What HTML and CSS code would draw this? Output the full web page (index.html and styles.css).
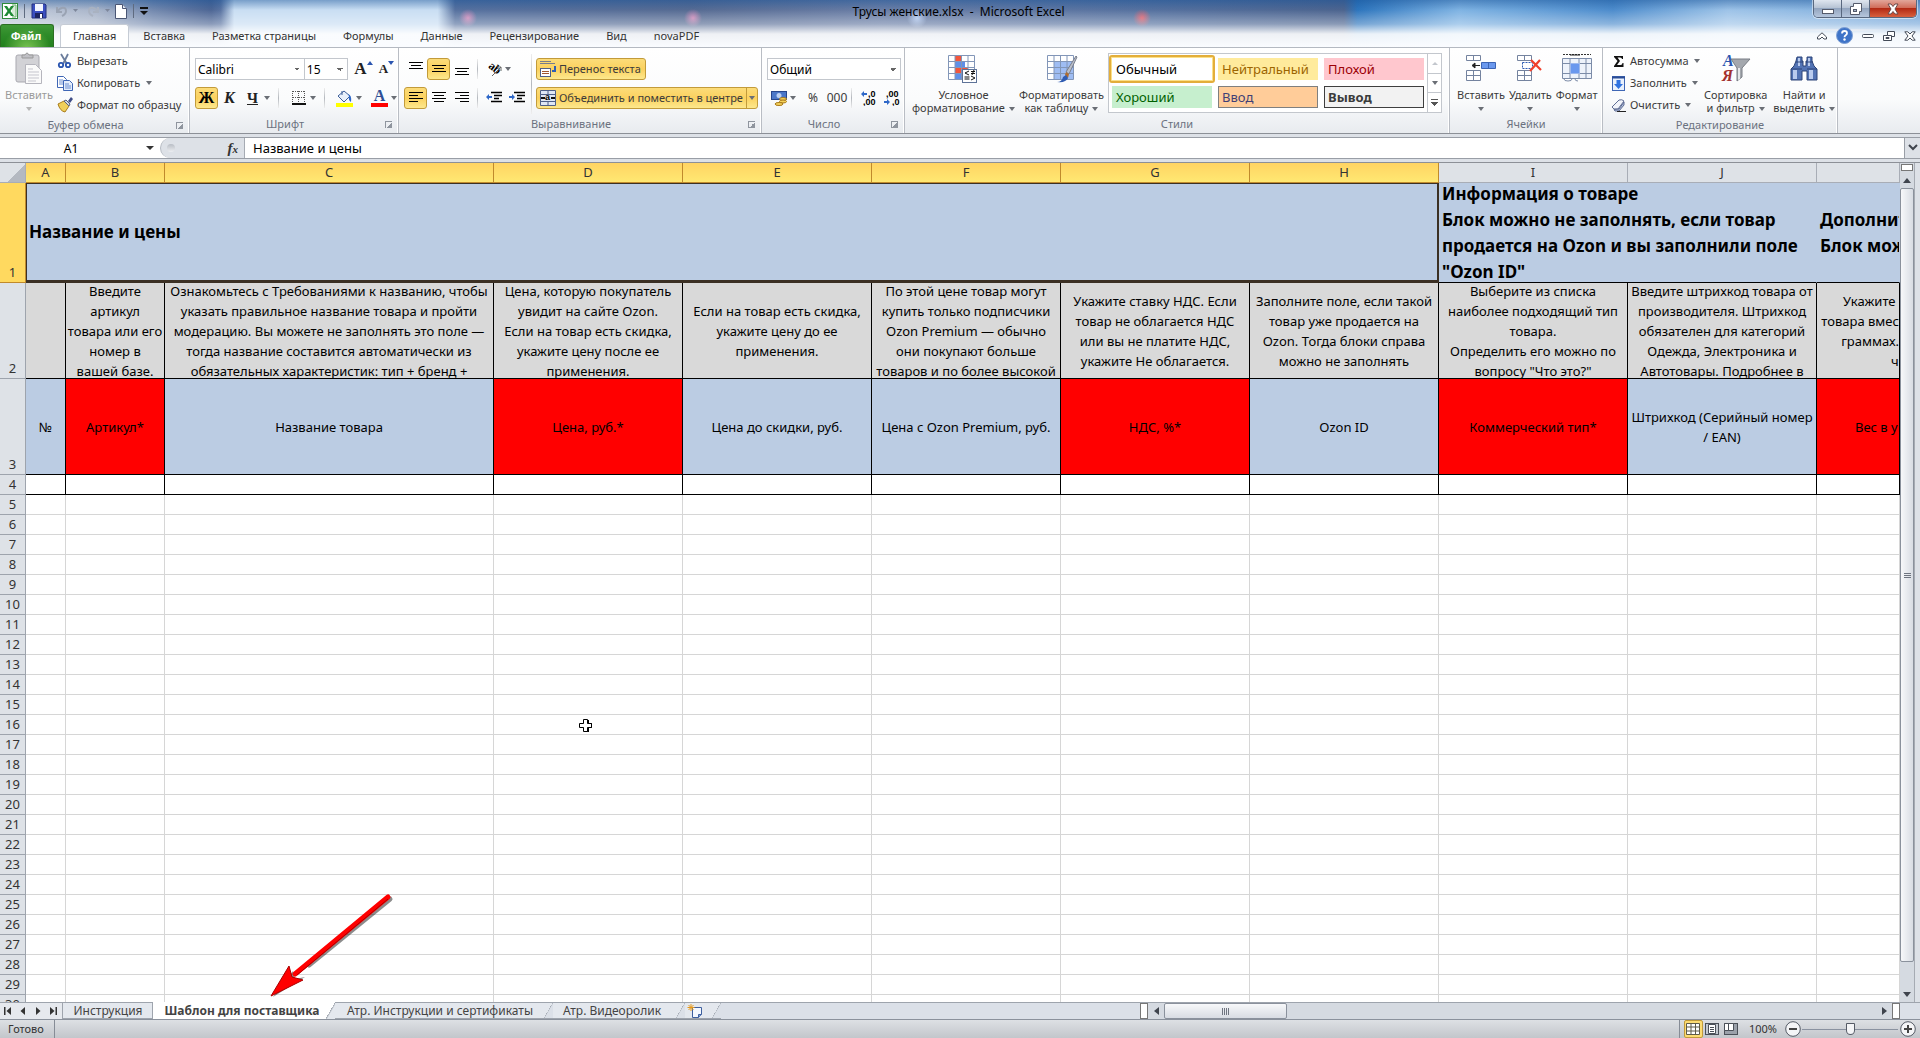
FILE: index.html
```html
<!DOCTYPE html>
<html lang="ru">
<head>
<meta charset="utf-8">
<title>Трусы женские.xlsx - Microsoft Excel</title>
<link rel="stylesheet" href="styles.css">
</head>
<body>
<header class="top">
  <div class="titlebar">
    <div class="quick">
      <svg width="16" height="16" viewBox="0 0 16 16"><rect x=".5" y=".5" width="15" height="15" fill="#fff" stroke="#2f8a3c"/><path d="M10 2h4v12h-4" fill="#d9ecd9" stroke="#6bb06f"/><path d="M2 3h3l2 3 2-3h3L8.500 8l3.500 5H9L7 10l-2 3H2l3.500-5z" fill="#1f8a35"/></svg>
      <i class="tick"></i>
      <button aria-label="Сохранить"><svg width="16" height="16" viewBox="0 0 16 16"><path d="M1 1h13l1 1v13H1z" fill="#3b4fc0" stroke="#24307e"/><rect x="4" y="1" width="8" height="7" fill="#f2f5ff"/><rect x="4" y="10" width="8" height="5" fill="#1d2560"/><rect x="9" y="11" width="2" height="4" fill="#fff"/></svg></button>
      <button class="gap" aria-label="Отменить"><svg width="24" height="14" viewBox="0 0 24 14"><path d="M2 3v5h5M2.500 7.500C5 3 11 2 11 7q0 3-4 5" fill="none" stroke="#9aa3b3" stroke-width="2"/><path d="M18 5h5l-2.500 3z" fill="#7d879b"/></svg></button>
      <button class="gap" aria-label="Вернуть"><svg width="24" height="14" viewBox="0 0 24 14"><path d="M11 3v5H6M10.500 7.500C8 3 2 2 2 7q0 3 4 5" fill="none" stroke="#a9b2c1" stroke-width="2"/><path d="M18 5h5l-2.500 3z" fill="#7d879b"/></svg></button>
      <button aria-label="Создать"><svg width="12" height="15" viewBox="0 0 12 15"><path d="M.5.5h7l4 4v10H.5z" fill="#fff" stroke="#4a5674"/><path d="M7.500.5v4h4" fill="#dfe6f2" stroke="#4a5674"/></svg></button>
      <i class="tick"></i>
      <button aria-label="Настройка панели"><svg width="8" height="10" viewBox="0 0 8 10"><path d="M0 1h8v2H0zM0 5h8L4 9z" fill="#111"/></svg></button>
    </div>
    <h1>Трусы женские.xlsx&nbsp; -&nbsp; Microsoft Excel</h1>
    <div class="winbtns">
      <button class="wb" aria-label="Свернуть"><svg width="14" height="14" viewBox="0 0 14 14"><rect x="1.500" y="7.500" width="11" height="4" fill="#fff" stroke="#555b6b"/></svg></button>
      <button class="wb" aria-label="Развернуть"><svg width="14" height="14" viewBox="0 0 14 14"><path d="M4.500 1.500h8v8h-2v3h-9v-8h3z" fill="#fff" stroke="#555b6b"/><rect x="4.500" y="7.500" width="3" height="2" fill="#aab6ca" stroke="#555b6b"/></svg></button>
      <button class="wb close" aria-label="Закрыть"><svg width="14" height="14" viewBox="0 0 14 14"><path d="M2 2h3l2 2.500L9 2h3L9 7l3 5H9L7 9.500 5 12H2l3-5z" fill="#fff" stroke="#6b4a4a"/></svg></button>
    </div>
  </div>
  <nav class="tabs">
    <button class="file">Файл</button>
    <button class="tab on">Главная</button>
    <button class="tab">Вставка</button>
    <button class="tab">Разметка страницы</button>
    <button class="tab">Формулы</button>
    <button class="tab">Данные</button>
    <button class="tab">Рецензирование</button>
    <button class="tab">Вид</button>
    <button class="tab">novaPDF</button>
    <div class="docbtns">
      <button aria-label="Свернуть ленту"><svg width="10" height="8" viewBox="0 0 10 8"><path d="M.5 5L5 .8 9.500 5v2H7L5 5 3 7H.5z" fill="#fff" stroke="#444b58"/></svg></button>
      <button aria-label="Справка"><svg width="17" height="17" viewBox="0 0 17 17"><circle cx="8.500" cy="8.500" r="8" fill="#3f74c8" stroke="#7d9fd4"/><path d="M6 6.500q0-2.500 2.500-2.500T11 6.300q0 1.200-1.300 1.900-1.200.7-1.200 2" fill="none" stroke="#fff" stroke-width="1.800"/><circle cx="8.500" cy="12.500" r="1.200" fill="#fff"/></svg></button>
      <button aria-label="Свернуть окно"><svg width="12" height="6" viewBox="0 0 12 6"><rect x=".5" y="1.500" width="11" height="3" rx="1" fill="#fff" stroke="#444b58"/></svg></button>
      <button aria-label="Восстановить окно"><svg width="12" height="12" viewBox="0 0 12 12"><path d="M4.500 1.500h7v5h-3v4h-8v-5h4z" fill="#fff" stroke="#444b58"/><path d="M4.500 5.500h4v2M3 7.500h3v1H3z" fill="none" stroke="#444b58"/></svg></button>
      <button aria-label="Закрыть окно"><svg width="12" height="10" viewBox="0 0 12 10"><path d="M.8.8h3L6 3 8.200.8h3L8 5l3.200 4.200h-3L6 7 3.800 9.200h-3L4 5z" fill="#fff" stroke="#444b58"/></svg></button>
    </div>
  </nav>
</header>

<div class="ribbon">
  <section class="grp clip">
    <div class="body">
      <button class="big dim"><svg width="28" height="32" viewBox="0 0 28 32"><rect x="1" y="3" width="23" height="27" rx="2" fill="#d2d2d6" stroke="#a9a9b0"/><path d="M7 6V3h3q2-4 4 0h4v3z" fill="#c0c0c5" stroke="#999"/><path d="M10.500 12.500h10l6 6v13h-16z" fill="#fafafa" stroke="#b5b5bd"/><path d="M13 17h5M13 20h11M13 23h11M13 26h11M13 29h8" stroke="#c5c5cd"/></svg><span>Вставить</span><i class="dd"></i></button>
      <div class="stack">
        <button class="row"><svg width="16" height="16" viewBox="0 0 16 16"><path d="M4 1l6 10M11 1L6 11" stroke="#6b7d9c" stroke-width="1.800"/><circle cx="4" cy="12" r="2.200" fill="none" stroke="#2a55b0" stroke-width="1.800"/><circle cx="11" cy="12" r="2.200" fill="none" stroke="#2a55b0" stroke-width="1.800"/></svg>Вырезать</button>
        <button class="row"><svg width="16" height="16" viewBox="0 0 16 16"><path d="M.5 1.500h6l3 3v8h-9z" fill="#fff" stroke="#3e66b5"/><path d="M6.500 5.500h6l3 3v7h-9z" fill="#e4edfb" stroke="#3e66b5"/><path d="M8 9h4M8 11h6M8 13h6M2 5h4M2 7h4M2 9h4" stroke="#6a8ed0"/></svg>Копировать<i class="dd"></i></button>
        <button class="row"><svg width="16" height="16" viewBox="0 0 16 16"><path d="M1 7l6-3 5 5-4 6q-5-1-7-8z" fill="#efcf5a" stroke="#a97c1b"/><path d="M7 4l2-1 4 4-1 2z" fill="#d5d8e0" stroke="#55607a"/><path d="M11 4l3-4 2 2-3 4z" fill="#3f4d86"/></svg>Формат по образцу</button>
      </div>
    </div>
    <footer>Буфер обмена<i class="launch"></i></footer>
  </section>

  <section class="grp font">
    <div class="body cols">
      <div class="line">
        <select class="combo w-font" aria-label="Шрифт"><option>Calibri</option></select><select class="combo w-size" aria-label="Размер"><option>15</option></select>
        <button class="ic ser big-a">A<svg width="6" height="4" viewBox="0 0 6 4"><path d="M0 4l3-4 3 4z" fill="#2a55b0"/></svg></button>
        <button class="ic ser small-a">A<svg width="6" height="4" viewBox="0 0 6 4"><path d="M0 0h6L3 4z" fill="#2a55b0"/></svg></button>
      </div>
      <div class="line">
        <button class="ic ser hot b">Ж</button>
        <button class="ic ser i">К</button>
        <button class="ic ser u">Ч</button><i class="dd"></i>
        <i class="sep"></i>
        <button class="ic"><svg width="14" height="14" viewBox="0 0 14 14"><path d="M1 .5h12M1 6.500h12M.5 0v13M6.500 0v13M12.500 0v13" stroke="#555" stroke-dasharray="1 1" fill="none"/><path d="M0 13h14" stroke="#111" stroke-width="2"/></svg></button><i class="dd"></i>
        <i class="sep"></i>
        <button class="ic"><svg width="17" height="17" viewBox="0 0 17 17"><path d="M2 6l6-5 6 5-6 6z" fill="#e8f0fb" stroke="#3c5e99"/><path d="M6 5V1" stroke="#3c5e99"/><path d="M12 4q4 1 3 8-3-2-2-6z" fill="#2f68c8"/><rect y="13" width="17" height="4" fill="#ff0"/></svg></button><i class="dd"></i>
        <button class="ic ser a-color">A<i></i></button><i class="dd"></i>
      </div>
    </div>
    <footer>Шрифт<i class="launch"></i></footer>
  </section>

  <section class="grp align">
    <div class="body">
      <div class="cols">
        <div class="line">
          <button class="ic"><svg width="14" height="14" viewBox="0 0 14 14"><path d="M0 .5h14M2 3.500h10M0 6.500h14" stroke="#000"/></svg></button>
          <button class="ic hot"><svg width="14" height="14" viewBox="0 0 14 14"><path d="M0 3.500h14M2 6.500h10M0 9.500h14" stroke="#000"/></svg></button>
          <button class="ic"><svg width="14" height="14" viewBox="0 0 14 14"><path d="M0 6.500h14M2 9.500h10M0 12.500h14" stroke="#000"/></svg></button>
          <i class="sep"></i>
          <button class="ic"><svg width="16" height="16" viewBox="0 0 16 16"><text x="1" y="8" font-family="Liberation Serif" font-weight="bold" font-size="12" transform="rotate(38 4 8)">ab</text><path d="M6 15l9-9M11 6h4v4" fill="none" stroke="#666"/></svg></button><i class="dd"></i>
        </div>
        <div class="line">
          <button class="ic hot"><svg width="14" height="14" viewBox="0 0 14 14"><path d="M0 1.500h14M0 4.500h9M0 7.500h14M0 10.500h9" stroke="#000"/></svg></button>
          <button class="ic"><svg width="14" height="14" viewBox="0 0 14 14"><path d="M0 1.500h14M2 4.500h10M0 7.500h14M2 10.500h10" stroke="#000"/></svg></button>
          <button class="ic"><svg width="14" height="14" viewBox="0 0 14 14"><path d="M0 1.500h14M5 4.500h9M0 7.500h14M5 10.500h9" stroke="#000"/></svg></button>
          <i class="sep"></i>
          <button class="ic"><svg width="16" height="14" viewBox="0 0 16 14"><path d="M5 1.500h11M8 4.500h8M8 7.500h5M5 10.500h11" stroke="#000" stroke-width="1.500"/><path d="M0 6l3-3v2h3v2H3v2z" fill="#2f68c8"/></svg></button>
          <button class="ic"><svg width="16" height="14" viewBox="0 0 16 14"><path d="M5 1.500h11M8 4.500h8M8 7.500h5M5 10.500h11" stroke="#000" stroke-width="1.500"/><path d="M6 6L3 3v2H0v2h3v2z" fill="#2f68c8"/></svg></button>
        </div>
      </div>
      <i class="sep tall"></i>
      <div class="cols">
        <div class="line"><button class="wide"><svg width="16" height="16" viewBox="0 0 16 16"><path d="M0 2.500h15M0 .5h11" stroke="#777d8c"/><rect x=".5" y="7.500" width="10" height="8" fill="#fff" stroke="#4e5f88"/><path d="M2 10.500h7M2 12.500h7" stroke="#a2562e"/><path d="M15 5v5h-3" fill="none" stroke="#2f5fb4" stroke-width="2"/></svg>Перенос текста</button></div>
        <div class="line"><button class="wide merge"><svg width="16" height="16" viewBox="0 0 16 16"><path d="M.5.500h15v15H.5zM8 0v4M8 12v4M0 4.500h16M0 11.500h16" fill="#dfe7f5" stroke="#4e5f88"/><path d="M1 8h4M11 8h4" stroke="#111" stroke-width="2"/><text x="5" y="10" font-family="Liberation Sans" font-weight="bold" font-size="9">a</text></svg>Объединить и поместить в центре<i class="split"><i class="dd"></i></i></button></div>
      </div>
    </div>
    <footer>Выравнивание<i class="launch"></i></footer>
  </section>

  <section class="grp number">
    <div class="body cols">
      <div class="line"><select class="combo w-num" aria-label="Числовой формат"><option>Общий</option></select></div>
      <div class="line">
        <button class="ic"><svg width="16" height="16" viewBox="0 0 16 16"><rect x=".5" y="1.500" width="15" height="8" fill="#4b77c8" stroke="#27468c"/><circle cx="8" cy="5.500" r="2.500" fill="#bcd0f2"/><ellipse cx="12" cy="9" rx="3.500" ry="1.500" fill="#f5d25b" stroke="#a8791a"/><ellipse cx="12" cy="11.500" rx="3.500" ry="1.500" fill="#f5d25b" stroke="#a8791a"/><ellipse cx="8" cy="14" rx="4" ry="1.500" fill="#f5d25b" stroke="#a8791a"/></svg></button><i class="dd"></i>
        <button class="ic digits">%</button>
        <button class="ic digits">000</button>
        <i class="sep"></i>
        <button class="ic"><svg width="16" height="16" viewBox="0 0 16 16"><path d="M0 4l3-3v2h3v2H3v2z" fill="#2f68c8"/><text x="7" y="7" font-family="Liberation Sans" font-weight="bold" font-size="9">,0</text><text x="2" y="15" font-family="Liberation Sans" font-weight="bold" font-size="9">,00</text></svg></button>
        <button class="ic"><svg width="16" height="16" viewBox="0 0 16 16"><text x="2" y="7" font-family="Liberation Sans" font-weight="bold" font-size="9">,00</text><path d="M6 12L3 9v2H0v2h3v2z" fill="#2f68c8"/><text x="8" y="15" font-family="Liberation Sans" font-weight="bold" font-size="9">,0</text></svg></button>
      </div>
    </div>
    <footer>Число<i class="launch"></i></footer>
  </section>

  <section class="grp styles">
    <div class="body">
      <button class="big"><svg width="32" height="32" viewBox="0 0 32 32"><path d="M1.500 3.500h26v24h-26z" fill="#fff"/><path d="M8 3h6v6H8zM8 15h13v6H8z" fill="#f2553c"/><path d="M8 9h10v6H8zM8 21h6v6H8z" fill="#5f8fe8"/><path d="M1.500 3.500h26v24h-26zM1.500 9.500h26M1.500 15.500h26M1.500 21.500h26M8 3v24M14.500 3v24M21 3v24" fill="none" stroke="#8296b8"/><rect x="15.500" y="17.500" width="14" height="13" fill="#fff" stroke="#5e7398"/><path d="M22 19l-4 2 4 2M17.500 25h5M17.500 27h5M24 19.500h4M24 21.500h4M27 18l-2 5M24 24l4 2-4 2" fill="none" stroke="#111"/></svg><span>Условное<br>форматирование<i class="dd"></i></span></button>
      <button class="big"><svg width="32" height="32" viewBox="0 0 32 32"><path d="M1.500 3.500h26v24h-26z" fill="#fff"/><path d="M8 9h20v18H8z" fill="#9fbdf3"/><path d="M1.500 3.500h26v24h-26zM1.500 9.500h26M1.500 15.500h26M1.500 21.500h26M8 3v24M14.500 3v24M21 3v24" fill="none" stroke="#8296b8"/><path d="M30 4L20 20l3 2 8-17z" fill="#b9bec9" stroke="#7a7f8c"/><path d="M20 20l3 2-1 4-3-3z" fill="#b26d2c"/><path d="M11 30q5 0 6-5l3-2 2 3q-2 5-11 4z" fill="#2f5cb2"/></svg><span>Форматировать<br>как таблицу<i class="dd"></i></span></button>
      <div class="gallery">
        <div class="cells">
          <button class="st normal">Обычный</button><button class="st neutral">Нейтральный</button><button class="st bad">Плохой</button>
          <button class="st good">Хороший</button><button class="st input">Ввод</button><button class="st output">Вывод</button>
        </div>
        <div class="gscroll">
          <button aria-label="Вверх"><i class="up"></i></button><button aria-label="Вниз"><i class="dd"></i></button><button aria-label="Ещё"><i class="more"></i></button>
        </div>
      </div>
    </div>
    <footer>Стили</footer>
  </section>

  <section class="grp cellsg">
    <div class="body">
      <button class="big"><svg width="32" height="32" viewBox="0 0 32 32"><path d="M1.500 3.500h14v5h-14zM8.500 3v5M1.500 18.500h14v10h-14zM8.500 18v10M1.500 23.500h14" fill="#fff" stroke="#74839f"/><path d="M16.500 10.500h14v6h-14zM23.500 10v6" fill="#6a98ee" stroke="#3c64b4"/><path d="M15 13.500H9M10 11l-3 2.500L10 16z" fill="#222" stroke="#222"/></svg><span>Вставить</span><i class="dd"></i></button>
      <button class="big"><svg width="32" height="32" viewBox="0 0 32 32"><path d="M3.500 3.500h14v5h-14zM10.500 3v5M3.500 18.500h14v10h-14zM10.500 18v10M3.500 23.500h14" fill="#fff" stroke="#74839f"/><path d="M8.500 10.500h10v6h-10z" fill="none" stroke="#2f5cb2" stroke-dasharray="2 1"/><path d="M17 8l10 10M26 8L16 19" stroke="#f0402c" stroke-width="2.200"/></svg><span>Удалить</span><i class="dd"></i></button>
      <button class="big"><svg width="32" height="32" viewBox="0 0 32 32"><path d="M1.500 6.500h29v20h-29zM1.500 11.500h29M1.500 21.500h29M9 6v20M18 6v20M25 6v20" fill="#eef3fb" stroke="#7c8ca8"/><rect x="9.500" y="11.500" width="9" height="10" fill="#6a98ee" stroke="#9db8ec"/><path d="M3 27q0 2 4 2t4-2M14 27q0 2 3 2" fill="#fff" stroke="#7c8ca8"/><path d="M2 2.500h28" stroke="#333" stroke-dasharray="2 1"/><path d="M9 3h10" stroke="#222"/></svg><span>Формат</span><i class="dd"></i></button>
    </div>
    <footer>Ячейки</footer>
  </section>

  <section class="grp edit">
    <div class="body">
      <div class="stack">
        <button class="row"><svg width="16" height="16" viewBox="0 0 16 16"><path d="M3 3h9v3h-1q0-1.500-2-1.500H6.500L9 8l-3 4h3.500q2 0 2-2h1v4H3v-1l3.500-5L3 4z" fill="#111"/></svg>Автосумма<i class="dd"></i></button>
        <button class="row"><svg width="16" height="16" viewBox="0 0 16 16"><rect x="1.500" y="1.500" width="12" height="14" fill="#e9f1fd" stroke="#3e66b5"/><path d="M1 2.500h13" stroke="#2b4c94" stroke-width="2"/><path d="M5.500 5h4v4h2.500L7.500 14 3 9h2.500z" fill="#2f72e0"/></svg>Заполнить<i class="dd"></i></button>
        <button class="row"><svg width="16" height="16" viewBox="0 0 16 16"><path d="M1 10l7-7q3-1 5 1l-6 8H3z" fill="#f2f4fa" stroke="#5f6d94"/><path d="M3 12.500l5-.5 5-7v3l-5 6H4z" fill="#b5c1de" stroke="#5f6d94"/><path d="M6 14.500h9" stroke="#222"/></svg>Очистить<i class="dd"></i></button>
      </div>
      <button class="big"><svg width="32" height="32" viewBox="0 0 32 32"><text x="3" y="14" font-family="Liberation Serif" font-weight="bold" font-style="italic" font-size="16" fill="#2a55b0">A</text><text x="2" y="29" font-family="Liberation Serif" font-weight="bold" font-style="italic" font-size="16" fill="#a3302e">Я</text><path d="M11 7h19l-8 9v9l-5 4V16z" fill="#a4a8ae" stroke="#787c84"/><path d="M18 16h2v11l-2 1z" fill="#e5e7ea"/></svg><span>Сортировка<br>и фильтр<i class="dd"></i></span></button>
      <button class="big"><svg width="32" height="32" viewBox="0 0 32 32"><path d="M9 5h5v4h1v5h3V9h1V5h5v4l2 5 3 3v11H19v-9h-5v9H3V17l3-3 2-5z" fill="#5273b4" stroke="#2c4478"/><path d="M5 18h4v9H5zM21 18h4v9h-4zM10 6h2v8h-2zM20 6h2v8h-2z" fill="#b9cbee"/><path d="M3 17h11M19 17h10M8 10h7M18 10h7" stroke="#2c4478"/></svg><span>Найти и<br>выделить<i class="dd"></i></span></button>
    </div>
    <footer>Редактирование</footer>
  </section>
</div>

<div class="formula">
  <input class="name" aria-label="Поле имени" value="A1">
  <i class="dd dark"></i>
  <div class="fx"><i class="knob"></i><span><em>f</em>x</span></div>
  <input class="expr" aria-label="Строка формул" value="Название и цены">
  <button class="expand" aria-label="Развернуть строку формул"><svg width="10" height="8" viewBox="0 0 10 8"><path d="M1 1l4 4 4-4" fill="none" stroke="#3f444d" stroke-width="2"/></svg></button>
</div>

<main class="work">
  <div class="sheet">
    <table>
      <colgroup><col class="c-h"><col class="c-a"><col class="c-b"><col class="c-c"><col class="c-d"><col class="c-d"><col class="c-d"><col class="c-d"><col class="c-d"><col class="c-d"><col class="c-d"><col></colgroup>
      <thead><tr><th class="corner"></th><th class="sel">A</th><th class="sel">B</th><th class="sel">C</th><th class="sel">D</th><th class="sel">E</th><th class="sel">F</th><th class="sel">G</th><th class="sel">H</th><th>I</th><th>J</th><th></th></tr></thead>
      <tbody id="rows">
        <tr class="r1"><th class="sel">1</th><td colspan="8" class="picked">Название и цены</td><td colspan="2"><div class="clip-text">Информация о товаре<br>Блок можно не заполнять, если товар<br>продается на Ozon и вы заполнили поле<br>"Ozon ID"</div></td><td>Дополнительно<br>Блок можно не заполнять</td></tr>
        <tr class="r2"><th>2</th><td></td>
          <td><div class="clip-text">Введите<br>артикул<br>товара или его<br>номер в<br>вашей базе.</div></td>
          <td><div class="clip-text">Ознакомьтесь с Требованиями к названию, чтобы<br>указать правильное название товара и пройти<br>модерацию. Вы можете не заполнять это поле —<br>тогда название составится автоматически из<br>обязательных характеристик: тип + бренд +</div></td>
          <td><div class="clip-text">Цена, которую покупатель<br>увидит на сайте Ozon.<br>Если на товар есть скидка,<br>укажите цену после ее<br>применения.</div></td>
          <td><div class="clip-text">Если на товар есть скидка,<br>укажите цену до ее<br>применения.</div></td>
          <td><div class="clip-text">По этой цене товар могут<br>купить только подписчики<br>Ozon Premium — обычно<br>они покупают больше<br>товаров и по более высокой</div></td>
          <td><div class="clip-text">Укажите ставку НДС. Если<br>товар не облагается НДС<br>или вы не платите НДС,<br>укажите Не облагается.</div></td>
          <td><div class="clip-text">Заполните поле, если такой<br>товар уже продается на<br>Ozon. Тогда блоки справа<br>можно не заполнять</div></td>
          <td><div class="clip-text">Выберите из списка<br>наиболее подходящий тип<br>товара.<br>Определить его можно по<br>вопросу "Что это?"</div></td>
          <td><div class="clip-text">Введите штрихкод товара от<br>производителя. Штрихкод<br>обязателен для категорий<br>Одежда, Электроника и<br>Автотовары. Подробнее в</div></td>
          <td><div class="clip-text cut">Укажите вес единицы<br>товара вместе с упаковкой в<br>граммах. Вес — целое<br>число.</div></td></tr>
        <tr class="r3"><th>3</th><td>№</td><td class="req">Артикул*</td><td>Название товара</td><td class="req">Цена, руб.*</td><td>Цена до скидки, руб.</td><td>Цена с Ozon Premium, руб.</td><td class="req">НДС, %*</td><td>Ozon ID</td><td class="req">Коммерческий тип*</td><td>Штрихкод (Серийный номер<br>/ EAN)</td><td class="req"><div class="cut">Вес в упаковке, г*</div></td></tr>
      </tbody>
    </table>
    <svg class="arrow" width="132" height="114" viewBox="0 0 132 114"><path d="M121 8L40 74" stroke="#000" stroke-opacity=".45" stroke-width="5" stroke-linecap="round"/><path d="M4 106L24 80l2 8 10-2z" fill="#000" fill-opacity=".45"/><path d="M119 6L26 83" stroke="#f00" stroke-width="5" stroke-linecap="round"/><path d="M119 8L28 84" stroke="#a00"/><path d="M2 105L20 75l3 11 11 3z" fill="#f00" stroke="#a00"/></svg>
    <svg class="cursor" width="15" height="15" viewBox="0 0 15 15"><path d="M6 2h5v3h3v5h-3v4H6v-4H2V5h4z" fill="#000"/><path d="M5.500 1.500h4v4h4v4h-4v4h-4v-4h-4v-4h4z" fill="#fff" stroke="#000"/></svg>
  </div>
  <aside class="vbar">
    <div class="vsplit"></div>
    <button aria-label="Прокрутка вверх"><i class="tri-up"></i></button>
    <div class="thumb"><i></i><i></i><i></i></div>
    <div class="track"></div>
    <button aria-label="Прокрутка вниз"><i class="tri-down"></i></button>
  </aside>
</main>

<div class="sheets">
  <div class="navs">
    <button aria-label="Первый лист"><svg width="8" height="8" viewBox="0 0 8 8"><path d="M0 0h1.500v8H0zM7 0v8L2.500 4z" fill="#333"/></svg></button>
    <button aria-label="Предыдущий лист"><svg width="8" height="8" viewBox="0 0 8 8"><path d="M6 0v8L1.500 4z" fill="#333"/></svg></button>
    <button aria-label="Следующий лист"><svg width="8" height="8" viewBox="0 0 8 8"><path d="M2 0v8l4.500-4z" fill="#333"/></svg></button>
    <button aria-label="Последний лист"><svg width="8" height="8" viewBox="0 0 8 8"><path d="M6.500 0H8v8H6.500zM1 0v8l4.500-4z" fill="#333"/></svg></button>
  </div>
  <button class="stab s1">Инструкция</button>
  <button class="stab s2">Шаблон для поставщика</button>
  <button class="stab s3">Атр. Инструкции и сертификаты</button>
  <button class="stab s4">Атр. Видеоролик</button>
  <button class="stab s5" aria-label="Вставить лист"><svg width="16" height="14" viewBox="0 0 16 14"><path d="M5.500 3.500h9v7l-3 3h-6z" fill="#f4f8ff" stroke="#3e5f9e"/><path d="M11.500 13.500v-3h3" fill="#7f9fd8" stroke="#3e5f9e"/><path d="M4 0v7M.5 3.500h7M1.500 1l5 5M6.500 1l-5 5" stroke="#e79a1c"/></svg></button>
  <div class="hbar">
    <i class="hsplit"></i>
    <button aria-label="Прокрутка влево"><i class="tri-left"></i></button>
    <div class="hthumb"><i></i><i></i><i></i><i></i></div>
    <div class="track"></div>
    <button aria-label="Прокрутка вправо"><i class="tri-right"></i></button>
    <i class="hsplit"></i>
  </div>
</div>

<footer class="status">
  <span class="ready">Готово</span>
  <div class="views">
    <button class="hotv" aria-label="Обычный"><svg width="14" height="12" viewBox="0 0 14 12"><path d="M.5.500h13v11H.5zM5 0v12M9.500 0v12M0 4h14M0 8h14" fill="#fff" stroke="#5f5a48"/></svg></button>
    <button aria-label="Разметка страницы"><svg width="14" height="12" viewBox="0 0 14 12"><rect x=".5" y=".5" width="13" height="11" fill="#c4c9d0" stroke="#4b5058"/><path d="M3.500 1.500h7v9h-7zM5 4.500h4M5 6.500h4M5 8.500h4" fill="#fff" stroke="#4b5058"/></svg></button>
    <button aria-label="Страничный режим"><svg width="14" height="12" viewBox="0 0 14 12"><rect x=".5" y=".5" width="13" height="11" fill="#9ba1aa" stroke="#4b5058"/><path d="M.5.500h4v7h-4zM4.500.500h5v7h-5z" fill="#fff" stroke="#4b5058"/></svg></button>
    <span class="pct">100%</span>
    <button aria-label="Уменьшить"><svg width="16" height="16" viewBox="0 0 16 16"><circle cx="8" cy="8" r="7.300" fill="#f4f5f7" stroke="#555b66"/><path d="M4 8h8" stroke="#444" stroke-width="2"/></svg></button>
    <input type="range" min="0" max="100" value="50" aria-label="Масштаб">
    <button aria-label="Увеличить"><svg width="16" height="16" viewBox="0 0 16 16"><circle cx="8" cy="8" r="7.300" fill="#f4f5f7" stroke="#555b66"/><path d="M4 8h8M8 4v8" stroke="#444" stroke-width="2"/></svg></button>
  </div>
</footer>
<script src="script.js"></script>
</body>
</html>
```
FILE: styles.css
```css
* { box-sizing: border-box; }
body {
  margin: 0; height: 100vh; display: flex; flex-direction: column; overflow: hidden;
  font: 12px/14px "Noto Sans", "Open Sans", sans-serif; color: #333; background: #dde1e7;
}
button { font: inherit; color: inherit; background: none; border: 0; padding: 0; margin: 0; display: flex; align-items: center; justify-content: center; white-space: nowrap; flex: none; }
i { display: block; flex: none; font-style: normal; }
svg { display: block; flex: none; }
h1 { margin: 0; font: inherit; }

.top {
  flex: none;
  background:
    linear-gradient(to bottom, rgba(20,80,150,.45) 0, rgba(20,80,150,0) 10px, rgba(255,255,255,.05) 12px, rgba(255,255,255,.35) 24px, rgba(255,255,255,.9) 34px, #fafcff 100%),
    radial-gradient(circle at 468px 18px, rgba(230,140,190,.8) 0, transparent 9px),
    radial-gradient(circle at 693px 18px, rgba(230,140,190,.8) 0, transparent 9px),
    radial-gradient(circle at 917px 18px, rgba(190,215,255,.8) 0, transparent 10px),
    radial-gradient(circle at 1142px 18px, rgba(235,90,100,.9) 0, transparent 9px),
    radial-gradient(ellipse at 96% 30px, rgba(255,225,215,.8) 0, transparent 60px),
    linear-gradient(to right, #c3ccdc 0, #a9b5ca 5%, #7288ae 8%, #4d6695 11%, #5a74a2 11.500%, #c9def3 12.200%, #c9def3 22.800%, #56719f 23.700%, #566b93 36%, #6a7ea6 46%, #55719f 60%, #4c648f 70%, #2d75bd 70.700%, #7fb3e3 76%, #4d8ccc 84%, #9dc3e8 90%, #78a8da 100%);
}
.titlebar { height: 24px; display: grid; grid-template-columns: 1fr auto 1fr; align-items: start; padding-right: 3px; }
.quick { display: flex; align-items: center; height: 22px; padding-left: 2px; gap: 4px; }
.quick .gap { margin-left: 4px; }
.quick .tick { width: 1px; height: 14px; margin: 0 2px; background: #5f6b80; }
.titlebar h1 { font-size: 12px; color: #000; line-height: 24px; }
.winbtns { justify-self: end; display: flex; border: 1px solid #59687f; border-top: 0; border-radius: 0 0 5px 5px; overflow: hidden; box-shadow: 0 0 0 1px rgba(255,255,255,.5); }
.wb { width: 28px; height: 17px; border-right: 1px solid #59687f; background: linear-gradient(#dfe6ef, #b3c0d2 50%, #93a5bf 50%, #b6c6dc); }
.wb.close { width: 46px; border: 0; background: linear-gradient(#e2a69a, #cf6753 50%, #b32a14 50%, #d8603e); }

.tabs { display: flex; align-items: stretch; height: 23px; font-size: 11px; color: #333; }
.file { width: 54px; margin-right: 6px; padding-right: 2px; color: #fff; font-weight: bold; border-radius: 3px 3px 0 0; border: 1px solid #2b6e22; border-bottom: 0; background: radial-gradient(at 50% 110%, #7cc653 0, transparent 65%), linear-gradient(#3f9836, #2c8a27 50%, #23801e); }
.tab { padding: 0 13px 0 14px; }
.tab.on { background: #fff; border: 1px solid #c6ccd5; border-bottom: 0; border-radius: 3px 3px 0 0; padding: 0 12px; }
.docbtns { margin-left: auto; display: flex; align-items: center; gap: 9px; padding-right: 4px; }

.ribbon { flex: none; display: flex; height: 87px; border-top: 1px solid #b4b9c1; border-bottom: 1px solid #8c9097; background: linear-gradient(#fff, #fafbfc 60%, #e8ebef); color: #3b3b3b; font-size: 11px; }
.grp { display: flex; flex-direction: column; border-right: 1px solid #b9bdc4; box-shadow: inset -1px 0 #fff; }
.grp .body { flex: 1; display: flex; }
.grp footer { position: relative; height: 18px; text-align: center; color: #6b7280; line-height: 18px; }
.clip footer, .font footer, .align footer, .number footer { padding-right: 18px; }
.launch { position: absolute; right: 6px; top: 6px; width: 7px; height: 7px; border: 1px solid #8f959e; border-right: 0; border-bottom: 0; background: linear-gradient(135deg, transparent 50%, #8f959e 50%); }
.clip { width: 190px; } .font { width: 209px; } .align { width: 363px; } .number { width: 143px; } .styles { width: 545px; } .cellsg { width: 153px; } .edit { width: 235px; }
.dd { display: inline-block; border: 3px solid transparent; border-top: 4px solid #6a6e75; border-bottom: 0; vertical-align: middle; }
.dd.dark { border: 4px solid transparent; border-top: 4px solid #333; border-bottom: 0; }
.big { flex-direction: column; justify-content: flex-start; line-height: 13px; text-align: center; padding-top: 4px; }
.big > span { margin-top: 4px; }
.big > .dd { margin-top: 6px; }
.big span .dd { margin-left: 4px; }
.dim { color: #9a9a9a; } .dim .dd { border-top-color: #b5b5b5; }
.stack { display: flex; flex-direction: column; padding-top: 2px; }
.row { height: 22px; justify-content: flex-start; gap: 3px; }
.clip .body { padding-left: 5px; gap: 4px; }
.clip .row { gap: 4px; }
.cols { display: flex; flex-direction: column; gap: 7px; padding-top: 10px; }
.grp .body.cols { flex-direction: column; }
.line { display: flex; align-items: center; height: 22px; }
.ic { width: 23px; height: 22px; }
.hot { border: 1px solid #c29b3a; border-radius: 3px; background: linear-gradient(#fcdc79, #fbd15f 50%, #fde88d); }
.ser { font: bold 16px/16px "Liberation Serif", serif; color: #222; }
.ser.b { color: #000; } .ser.i { font-style: italic; } .ser.u { text-decoration: underline; font-size: 15px; }
.big-a, .small-a { align-items: flex-start; }
.big-a { font-size: 17px; padding-top: 3px; margin-left: 2px; }
.small-a { font-size: 13px; padding-top: 3px; }
.a-color { flex-direction: column; color: #2f4f96; margin-left: 6px; line-height: 13px; }
.a-color i { width: 17px; height: 4px; margin-top: 1px; background: #f00; }
.sep { width: 1px; height: 20px; margin: 0 9px; background: linear-gradient(#eee, #b4b8be, #eee); }
.sep.tall { height: 60px; margin: 6px 4px 0 3px; }
.combo { appearance: none; height: 22px; border: 1px solid #c3c7cd; border-radius: 0; color: #000; padding: 0 2px; font: 12px "Noto Sans", sans-serif;
  background: linear-gradient(45deg, transparent 50%, #666 50%) right 7px top 9px / 3px 3px no-repeat, linear-gradient(-45deg, transparent 50%, #666 50%) right 4px top 9px / 3px 3px no-repeat, #fff; }
.w-font { width: 112px; } .w-size { width: 45px; margin: 0 2px 0 -1px; } .w-num { width: 134px; }
.font .body { padding-left: 5px; }
.font .sep { margin: 0 8px; }
.align .body { padding-left: 5px; }
.align .sep:not(.tall) { margin: 0 4px; }
.wide { height: 22px; padding: 0 4px 0 3px; gap: 3px; border: 1px solid #c29b3a; border-radius: 3px; background: linear-gradient(#fcdc79, #fbd15f 50%, #fde88d); }
.merge { padding-right: 2px; }
.split { align-self: stretch; display: flex; align-items: center; border-left: 1px solid #c29b3a; padding-left: 2px; }
.number .body { padding-left: 5px; }
.digits { font-size: 12px; width: 24px; }
.dd + .digits { margin-left: 5px; }
.number .sep { margin: 0 5px 0 2px; }

.styles .body { padding-left: 7px; gap: 4px; }
.gallery { display: flex; height: 60px; margin-top: 5px; border: 1px solid #c3c7cd; background: #fff; }
.cells { display: grid; grid-template-columns: repeat(3, 106px); grid-template-rows: 29px 28px; align-items: center; }
.st { height: 22px; margin: 0 3px; padding: 0 3px; justify-content: flex-start; font-size: 13px; border: 1px solid transparent; }
.st.normal { height: 28px; margin: 0; padding: 0 5px; color: #000; border: 2px solid #e3ae3a; border-radius: 3px; box-shadow: inset 0 0 0 1px #fbe089; }
.st.neutral { background: #ffeb9c; color: #9c6500; } .st.bad { background: #ffc7ce; color: #9c0006; } .st.good { background: #c6efce; color: #006100; }
.st.input { background: #ffcc99; color: #3f3f76; border-color: #7f7f7f; } .st.output { background: #f2f2f2; border-color: #3f3f3f; font-weight: bold; }
.gscroll { display: flex; flex-direction: column; width: 14px; border-left: 1px solid #c3c7cd; }
.gscroll button { flex: 1; border-bottom: 1px solid #c3c7cd; }
.gscroll button:last-child { border: 0; }
.up { border: 3px solid transparent; border-bottom: 3px solid #c3c7cd; border-top: 0; }
.more { width: 7px; height: 7px; border-top: 1px solid #555; background: linear-gradient(45deg, transparent 50%, #555 50%) left bottom / 4px 4px no-repeat, linear-gradient(-45deg, transparent 50%, #555 50%) right bottom / 4px 4px no-repeat; }
.cellsg .body { padding-left: 7px; gap: 4px; }
.edit .body { padding-left: 8px; }
.edit .stack { width: 93px; }
.edit .big + .big { margin-left: 6px; }
.edit .row .dd, .clip .row .dd { margin-left: 2px; }

.formula { flex: none; display: flex; align-items: center; height: 22px; margin-top: 3px; border-top: 1px solid #999ea6; border-bottom: 1px solid #999ea6; background: #fff; }
.formula input { border: 0; padding: 0; height: 20px; background: transparent; color: #000; font: 13px "Noto Sans", sans-serif; outline: 0; }
.formula .name { width: 146px; text-align: center; padding-right: 4px; font-size: 12px; }
.fx { display: flex; justify-content: space-between; align-items: center; width: 85px; height: 20px; margin-left: 6px; padding: 0 6px; border-right: 1px solid #a6abb3; border-left: 1px solid #b5bac2; border-radius: 10px 0 0 10px; background: #dde1e7; }
.fx span { font: italic bold 11px/16px "Liberation Serif", serif; color: #333; } .fx em { font-size: 15px; }
.knob { width: 8px; height: 8px; border-radius: 50%; background: linear-gradient(#b8bdc5, #eceef1); }
.formula .expr { flex: 1; margin-left: 8px; }
.expand { width: 16px; height: 20px; border-left: 1px solid #999ea6; background: #dde1e7; }

.work { flex: 1; min-height: 0; display: flex; margin-top: 3px; border-top: 1px solid #8c9097; padding-right: 5px; }
.sheet { position: relative; flex: 1; min-width: 0; overflow: hidden; background: #fff; }
table { width: 100%; table-layout: fixed; border-collapse: separate; border-spacing: 0; font-size: 13px; line-height: 20px; color: #000; }
.c-h { width: 26px; } .c-a { width: 40px; } .c-b { width: 99px; } .c-c { width: 329px; } .c-d { width: 189px; }
th { height: 20px; padding: 0; font-weight: normal; line-height: 19px; color: #333; background: #dee2e7; border-right: 1px solid #9ea4ad; border-bottom: 1px solid #9ea4ad; vertical-align: bottom; }
thead th { border-color: #a8adb6; }
th.sel { background: linear-gradient(#ffd463, #ffe872); border-color: #c08a2c; }
tbody th.sel { background: #ffd95f; }
.corner { background: linear-gradient(135deg, #dee2e7 60%, #b4b9c1 60%); }
td { padding: 0; height: 20px; text-align: center; white-space: nowrap; border-right: 1px solid #d6d6d6; border-bottom: 1px solid #d6d6d6; overflow: hidden; }
.r1 td, .r3 td { background: #bbcce3; }
.r1 td { height: 100px; padding-left: 3px; text-align: left; font-size: 17px; font-weight: bold; line-height: 26px; border-color: #bbcce3; border-bottom-color: #000; }
.r1 .picked { padding-left: 2px; border: 1px solid #3b3024; border-right-width: 2px; border-bottom-width: 3px; }
.r1 .clip-text { height: 99px; }
.r2 td { height: 96px; background: #d9d9d9; }
.r3 td { height: 96px; }
.r2 td, .r3 td, .r4 td { border-color: #000; }
.clip-text { display: flex; flex-direction: column; justify-content: center; overflow: hidden; }
.r2 .clip-text { display: grid; height: 95px; align-content: center; justify-content: center; }
.r3 .req { background: #f00; }
.cut { width: 189px; }
.arrow { position: absolute; left: 269px; top: 728px; }
.cursor { position: absolute; left: 578px; top: 555px; }

.vbar { width: 15px; display: flex; flex-direction: column; align-items: stretch; background: #d5dae1; border-right: 1px solid #a6abb3; }
.vsplit { height: 7px; margin: 1px; border: 1px solid #777; background: #fff; }
.vbar button { height: 16px; }
.vbar .thumb { flex: 97; display: flex; flex-direction: column; align-items: center; justify-content: center; gap: 1px; border: 1px solid #8a919c; border-radius: 2px; background: linear-gradient(to right, #f7f8fa, #d8dce3); }
.vbar .thumb i { width: 7px; height: 1px; background: #6f7580; }
.vbar .track { flex: 3; }
.tri-up, .tri-down, .tri-left, .tri-right { border: 4px solid transparent; }
.tri-up { border-bottom: 5px solid #3f444d; border-top: 0; } .tri-down { border-top: 5px solid #3f444d; border-bottom: 0; }
.tri-left { border-right: 5px solid #3f444d; border-left: 0; } .tri-right { border-left: 5px solid #3f444d; border-right: 0; }

.sheets { flex: none; display: flex; height: 17px; background: #dbe0e8; border-top: 1px solid #9ea4ad; padding-right: 20px; color: #444; font-size: 12px; }
.navs { display: flex; justify-content: space-around; width: 63px; padding-right: 2px; border-right: 1px solid #9ea4ad; background: #e6e9ee; }
.stab { background: #e4e8ee; border-bottom: 1px solid #9ea4ad; }
.s1 { width: 90px; padding-left: 1px; border-right: 1px solid #9ea4ad; }
.s2 { width: 182px; margin-top: -1px; padding-right: 4px; font-weight: bold; background: linear-gradient(120deg, #fff 95%, #9ea4ad 95%, #e4e8ee 96%); border: 0; }
.s3 { width: 218px; padding-right: 8px; }
.s4 { width: 132px; padding-right: 14px; }
.s5 { width: 36px; padding-right: 16px; }
.s3, .s4, .s5 { background: linear-gradient(120deg, transparent calc(100% - 8px), #9ea4ad calc(100% - 8px), #dbe0e8 calc(100% - 7px)), #e4e8ee; }
.hbar { flex: none; width: 40%; margin-left: auto; display: flex; align-items: stretch; background: #d5dae1; }
.hsplit { width: 8px; border: 1px solid #777; background: #fff; }
.hbar button { width: 16px; }
.hthumb { flex: 17; display: flex; align-items: center; justify-content: center; gap: 1px; border: 1px solid #8a919c; border-radius: 2px; background: linear-gradient(#f7f8fa, #d8dce3); }
.hthumb i { width: 1px; height: 7px; background: #6f7580; }
.hbar .track { flex: 83; }

.status { flex: none; display: flex; align-items: center; justify-content: space-between; height: 19px; border-top: 1px solid #8a919c; background: linear-gradient(#dde0e4, #c2c6cb); font-size: 11px; color: #333; }
.ready { width: 55px; padding-left: 8px; border-right: 1px solid #868c96; line-height: 18px; }
.views { display: flex; align-items: center; height: 18px; border-left: 1px solid #868c96; padding: 0 3px 0 4px; }
.views button { width: 19px; height: 18px; }
.views .hotv { border: 1px solid #c29b3a; border-radius: 2px; background: #fddc73; }
.pct { margin: 0 6px 0 8px; }
.views input { appearance: none; width: 96px; height: 16px; margin: 0; background: linear-gradient(#8a92a0, #8a92a0) center / 100% 1px no-repeat; }
.views input::-webkit-slider-thumb { appearance: none; width: 9px; height: 12px; border: 1px solid #555b66; border-radius: 1px 1px 5px 5px; background: #f4f5f7; }
```
FILE: script.js
```js
// Empty rows below the filled part of the sheet
const body = document.getElementById('rows');
for (let n = 4; n <= 30; n++) {
  const tr = document.createElement('tr');
  if (n === 4) tr.className = 'r4';
  tr.innerHTML = '<th>' + n + '</th>' + '<td></td>'.repeat(11);
  body.append(tr);
}
```
